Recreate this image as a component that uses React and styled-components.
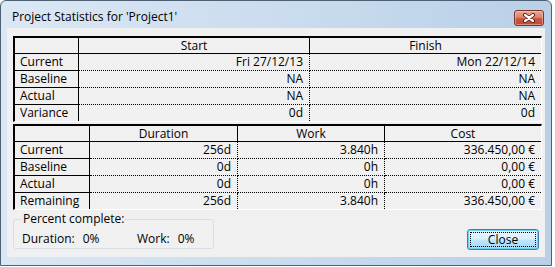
import React from 'react';
import styled, { createGlobalStyle } from 'styled-components';

const GlobalStyle = createGlobalStyle`
  html, body {
    margin: 0;
    padding: 0;
    background: #fff;
  }
  body {
    font-family: "Open Sans", sans-serif;
    font-size: 12px;
    color: #000;
  }
`;

const schedule = {
  widths: '64px 231px 231px',
  columns: ['Start', 'Finish'],
  rows: [
    ['Current', 'Fri 27/12/13', 'Mon 22/12/14'],
    ['Baseline', 'NA', 'NA'],
    ['Actual', 'NA', 'NA'],
    ['Variance', '0d', '0d'],
  ],
};

const effort = {
  widths: '75px 148px 147px 156px',
  columns: ['Duration', 'Work', 'Cost'],
  rows: [
    ['Current', '256d', '3.840h', '336.450,00 €'],
    ['Baseline', '0d', '0h', '0,00 €'],
    ['Actual', '0d', '0h', '0,00 €'],
    ['Remaining', '256d', '3.840h', '336.450,00 €'],
  ],
};

const StatsGrid = ({ data }) => {
  const last = data.rows.length - 1;
  return (
    <Grid $cols={data.widths} $rows={data.rows.length}>
      <HeadCell />
      {data.columns.map((c, i) => (
        <HeadCell key={c} $lastCol={i === data.columns.length - 1}>{c}</HeadCell>
      ))}
      {data.rows.map((row, r) => (
        <React.Fragment key={row[0]}>
          <LabelCell $lastRow={r === last}>{row[0]}</LabelCell>
          {row.slice(1).map((v, i) => (
            <DataCell key={i} $lastRow={r === last} $lastCol={i === row.length - 2}>
              {v}
            </DataCell>
          ))}
        </React.Fragment>
      ))}
    </Grid>
  );
};

const App = () => {
  return (
    <>
      <GlobalStyle />
      <Window>
        <TitleBar>
          <Title>Project Statistics for 'Project1'</Title>
          <CloseButton aria-label="Close">
            <svg width="14" height="10" viewBox="0 0 14 10">
              <path d="M3 2 L11 8 M11 2 L3 8" stroke="#4a1a12" strokeWidth="4" strokeLinecap="round" />
              <path d="M3 2 L11 8 M11 2 L3 8" stroke="#fff" strokeWidth="2.2" strokeLinecap="round" />
            </svg>
          </CloseButton>
        </TitleBar>
        <Client>
          <StatsGrid data={schedule} />
          <StatsGrid data={effort} />
          <BottomRow>
            <GroupBox>
              <Legend>Percent complete:</Legend>
              <StatLine>
                <Stat $width="115px">
                  <span>Duration:</span>
                  <span>0%</span>
                </Stat>
                <Stat>
                  <span>Work:</span>
                  <span>0%</span>
                </Stat>
              </StatLine>
            </GroupBox>
            <DialogButton>Close</DialogButton>
          </BottomRow>
        </Client>
      </Window>
    </>
  );
};

const Window = styled.div`
  width: 552px;
  height: 266px;
  box-sizing: border-box;
  border: 1px solid #4d6074;
  border-radius: 6px 6px 0 0;
  background: linear-gradient(to right, #dbe7f4 0%, #c9dbee 55%, #b9d0e8 100%);
  box-shadow: 0 1px 0 #1f7d99;
  display: flex;
  flex-direction: column;
`;

const TitleBar = styled.div`
  height: 27px;
  flex: none;
  display: flex;
  align-items: flex-start;
  justify-content: space-between;
  padding: 0 7px 0 11px;
`;

const Title = styled.div`
  margin-top: 8px;
  line-height: 16px;
  color: #000;
`;

const CloseButton = styled.div`
  margin-top: 9px;
  width: 30px;
  height: 16px;
  box-sizing: border-box;
  border: 1px solid #7a3326;
  border-radius: 3px;
  background: linear-gradient(#e9a897 0%, #d98370 45%, #c9573f 55%, #c2482f 100%);
  box-shadow: inset 0 0 0 1px rgba(255, 220, 210, 0.45);
  display: flex;
  align-items: center;
  justify-content: center;
`;

const Client = styled.div`
  flex: 1;
  margin: 0 6px 8px 6px;
  padding: 8px 3px 7px 6px;
  background: #f0f0f0;
  display: flex;
  flex-direction: column;
`;

const Grid = styled.div`
  display: grid;
  grid-template-columns: ${p => p.$cols};
  grid-template-rows: 16px repeat(${p => p.$rows - 1}, 17px) 16px;
  width: 529px;
  box-sizing: border-box;
  border-top: 2px solid #000;
  border-left: 2px solid #000;
  border-right: 1px solid #fff;
  border-bottom: 1px solid #fff;
  & + & {
    margin-top: 2px;
  }
`;

const BaseCell = styled.div`
  box-sizing: border-box;
  line-height: 16px;
  white-space: nowrap;
  overflow: hidden;
`;

const HeadCell = styled(BaseCell)`
  text-align: center;
  border-bottom: 1px solid #000;
  border-right: ${p => (p.$lastCol ? 'none' : '1px solid #000')};
`;

const LabelCell = styled(BaseCell)`
  padding-left: 5px;
  border-right: 1px solid #000;
  border-bottom: ${p => (p.$lastRow ? 'none' : '1px solid #000')};
`;

const DataCell = styled(BaseCell)`
  text-align: right;
  padding-right: 6px;
  border-right: ${p => (p.$lastCol ? 'none' : '1px dotted #000')};
  border-bottom: ${p => (p.$lastRow ? 'none' : '1px dotted #000')};
`;

const BottomRow = styled.div`
  flex: 1;
  display: flex;
  align-items: flex-end;
  justify-content: space-between;
`;

const GroupBox = styled.fieldset`
  margin: 0 0 1px 0;
  padding: 4px 8px 0;
  width: 201px;
  min-inline-size: 0;
  height: 38px;
  box-sizing: border-box;
  border: 1px solid #d5dfe5;
  border-radius: 3px;
`;

const Legend = styled.legend`
  padding: 0 1px;
  line-height: 16px;
`;

const StatLine = styled.div`
  display: flex;
  line-height: 16px;
`;

const Stat = styled.div`
  display: flex;
  gap: 8px;
  flex: none;
  width: ${p => p.$width || 'auto'};
`;

const DialogButton = styled.div`
  width: 72px;
  height: 21px;
  box-sizing: border-box;
  border: 1px solid #3c7fb1;
  border-radius: 3px;
  background: linear-gradient(#eaf6fd 0%, #d9f0fc 48%, #bee6fd 52%, #a7d9f5 100%);
  box-shadow: inset 0 0 0 1px #6fd0f5;
  outline: 1px dotted #000;
  outline-offset: -4px;
  display: flex;
  align-items: center;
  justify-content: center;
  line-height: 16px;
  margin-right: 3px;
`;

export default App;
